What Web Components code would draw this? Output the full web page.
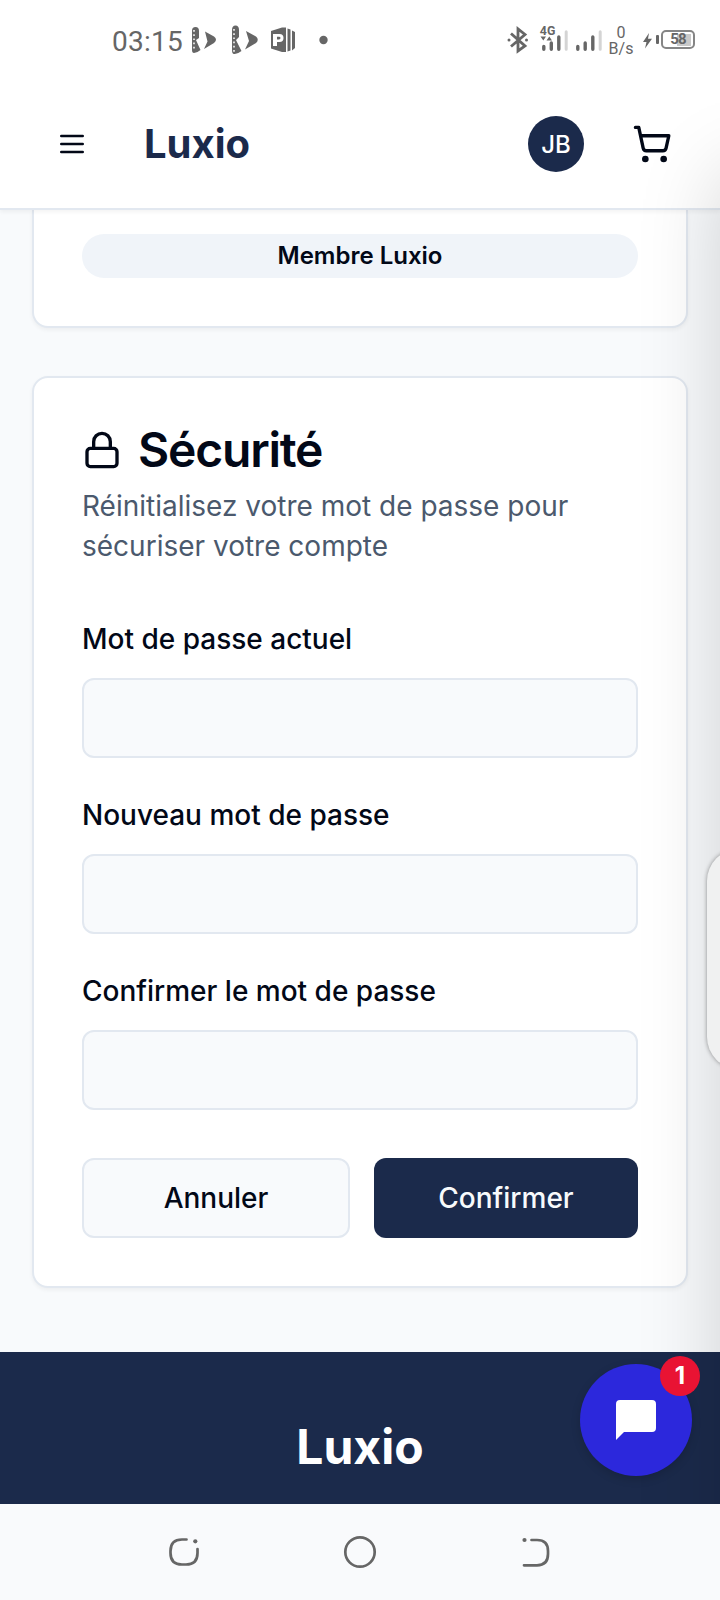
<!DOCTYPE html>
<html lang="fr">
<head>
<meta charset="utf-8">
<title>Luxio – Sécurité</title>
<style>
html,body{margin:0;padding:0}
body{width:720px;height:1600px;overflow:hidden;font-family:Inter,"Liberation Sans",sans-serif;color:#020817;background:#f8fafc}
</style>
</head>
<body>
<luxio-app></luxio-app>
<script>
function define(name, html) {
  const t = document.createElement('template');
  t.innerHTML = html;
  customElements.define(name, class extends HTMLElement {
    constructor() {
      super();
      this.attachShadow({ mode: 'open' }).appendChild(t.content.cloneNode(true));
    }
  });
}

define('status-bar', `
<style>
:host{display:flex;box-sizing:border-box;height:80px;background:#fff;color:#666;font-family:Roboto,sans-serif;justify-content:space-between;padding:0 25px 0 112px;position:relative;z-index:1}
.side{display:flex;align-items:flex-start}
svg{display:block;flex:none}
.time{font-size:28px;line-height:33px;letter-spacing:.25px;margin-top:25px;width:76.5px;white-space:nowrap}
.rate{display:flex;flex-direction:column;align-items:center;width:26px;margin:25px 0 0 6px;font-size:16px;line-height:16px;white-space:nowrap}
.bat{box-sizing:border-box;display:flex;align-items:center;justify-content:center;width:34px;height:19px;border:2px solid #858585;border-radius:5px;margin:30px 0 0 1px;font-size:15px;font-weight:700;line-height:15px;letter-spacing:-.8px;background:linear-gradient(#c9c9c9,#c9c9c9) 14px 1.5px/14px 12px no-repeat}
</style>
<div class="side">
 <span class="time">03:15</span>
 <svg width="110" height="80" viewBox="189 0 110 80" fill="#666">
  <g><path d="M192 30.500Q192 27 195.500 27Q199 27 199 31V38L196 40L200.500 50Q197 53 194 53Q192 53 192 50Z"/><path d="M205 31.500L214 36.500Q218 39.500 214 43L204 49L207.500 41.500Z"/><path d="M194 30v21" stroke="#fff" stroke-width="1.500" stroke-dasharray="1.700 2.500"/></g>
  <g><path d="M232 30Q232 25.500 235.500 25.500Q239 25.500 239 30V37L236 40L241.500 51Q237 54.500 234 54Q232 54 232 50Z"/><path d="M246 31L256 36.500Q259.500 39.500 256 43L245 49.500L249 41Z"/><path d="M234 29v23" stroke="#fff" stroke-width="1.500" stroke-dasharray="1.700 2.500"/></g>
  <path d="M271 31L282 27.500H286V52H282L271 48.500Z"/><path d="M287.500 28.500L290.500 29.500V50.500L287.500 51.500ZM292 30.500L295 32V48L292 50.500Z"/>
  <path d="M273 34h6.500q4 0 4 4t-4 4H277v4h-4z" fill="#fff"/><path d="M277 36.700h2q1.500 0 1.500 1.400t-1.500 1.400h-2z"/>
 </svg>
 <svg width="30" height="80"><circle cx="24.500" cy="40" r="4.200" fill="#666"/></svg>
</div>
<div class="side">
 <svg width="96" height="80" viewBox="506 0 96 80" fill="#666">
  <path d="M511 33.500L525 46L518 51V29L525 34.500L511 46.500" fill="none" stroke="#666" stroke-width="2.800"/><circle cx="509" cy="40" r="1.500"/><circle cx="526.500" cy="40" r="1.500"/>
  <text x="539.800" y="35" font-size="13.500" font-weight="700" textLength="15.500" lengthAdjust="spacingAndGlyphs">4G</text>
  <path d="M540.500 36.500h5.500l-2.700 4zM546.500 40.500h5.500l-2.700-4z"/>
  <g stroke-width="3.400" stroke-linecap="round" stroke="#666"><path d="M543.800 46.400v2.900M551.300 43v6.300M558.800 37v12.300M577.800 46.400v2.900M585.200 43v6.300M592.800 37v12.300"/><path stroke="#d4d4d4" stroke-width="3" d="M566.200 31.700v17.600M600.200 31.700v17.600"/></g>
 </svg>
 <div class="rate"><span>0</span><span>B/s</span></div>
 <svg width="24" height="80" viewBox="636 0 24 80" fill="#666" style="margin-left:2px"><path d="M649 33L643 42H646.500L645 48.500L652 38.800H648Z"/><rect x="656" y="35" width="3" height="9" rx="1"/></svg>
 <div class="bat">58</div>
</div>`);

define('app-header', `
<style>
:host{display:flex;box-sizing:border-box;align-items:center;height:130px;background:#fff;border-bottom:2px solid #e2e8f0;padding:0 48px 0 56px;box-shadow:0 2px 4px rgba(0,0,0,.05);position:relative}
svg{display:block;fill:none;stroke:#020817;stroke-width:2;stroke-linecap:round;stroke-linejoin:round}
.brand{margin-left:56px;font-size:40px;line-height:56px;font-weight:700;color:#1b2a4b}
.av{margin-left:auto;width:56px;height:56px;border-radius:50%;background:#1b2a4b;color:#fff;display:flex;align-items:center;justify-content:center;font-size:24px;font-weight:500}
.cart{margin-left:48px}
</style>
<svg width="32" height="32" viewBox="0 0 24 24"><path d="M4 6h16M4 12h16M4 18h16"/></svg>
<span class="brand">Luxio</span>
<span class="av">JB</span>
<svg class="cart" width="40" height="40" viewBox="0 0 24 24"><circle cx="8" cy="21" r="1"/><circle cx="19" cy="21" r="1"/><path d="M2.050 2.050h2l2.660 12.420a2 2 0 0 0 2 1.580h9.780a2 2 0 0 0 1.950-1.570l1.650-7.430H5.120"/></svg>`);

define('luxio-card', `
<style>
:host{display:block;box-sizing:border-box;background:#fff;border:2px solid #e2e8f0;border-radius:16px;padding:48px;box-shadow:0 2px 4px rgba(0,0,0,.05)}
:host([cut]){border-top:0;border-radius:0 0 16px 16px;padding-top:24px}
</style><slot></slot>`);

define('member-badge', `
<style>
:host{display:flex;height:44px;border-radius:22px;background:#f0f4f9;align-items:center;justify-content:center;font-size:24px;font-weight:600;line-height:32px}
</style><slot></slot>`);

define('card-heading', `
<style>
:host{display:block}
.t{display:flex;gap:16px;align-items:center;font-size:48px;line-height:48px;font-weight:600;letter-spacing:-.025em}
svg{display:block;fill:none;stroke:#020817;stroke-width:2;stroke-linecap:round;stroke-linejoin:round}
.d{margin:12px 0 48px;font-size:28px;line-height:40px;color:#4b596d}
</style>
<div class="t"><svg width="40" height="40" viewBox="0 0 24 24"><rect width="18" height="11" x="3" y="11" rx="2"/><path d="M7 11V7a5 5 0 0 1 10 0v4"/></svg><span><slot></slot></span></div>
<div class="d"><slot name="description"></slot></div>`);

define('password-field', `
<style>
:host{display:block;margin-bottom:32px}
label{display:block;font-size:28px;line-height:48px;font-weight:500;padding-top:1px;height:47px;margin-bottom:16px}
input{display:block;box-sizing:border-box;width:100%;height:80px;border:2px solid #e2e8f0;border-radius:12px;background:#f8fafc;padding:0 24px;font:inherit;outline:0}
</style>
<label><slot></slot></label><input type="password">`);

define('luxio-button', `
<style>
:host{display:flex;box-sizing:border-box;flex:1 1 0;height:80px;align-items:center;justify-content:center;border-radius:12px;font-size:28px;line-height:40px;font-weight:500;background:#1b2a4b;color:#f8fafc}
:host([outline]){border:2px solid #e2e8f0;background:#f8fafc;color:#020817}
</style><slot></slot>`);

define('button-row', `
<style>:host{display:flex;gap:24px;margin-top:48px}</style><slot></slot>`);

define('app-footer', `
<style>
:host{display:block;box-sizing:border-box;height:152px;background:#1b2a4b;color:#fff;text-align:center;padding-top:63px;font-size:48px;line-height:64px;font-weight:700}
</style>Luxio`);

define('chat-bubble', `
<style>
:host{position:absolute;left:580px;top:1364px;width:112px;height:112px;border-radius:50%;background:#2c28dc;display:flex;align-items:center;justify-content:center;box-shadow:0 3px 10px rgba(0,0,0,.16)}
.n{position:absolute;right:-8px;top:-8px;width:40px;height:40px;border-radius:50%;background:#e91333;color:#fff;display:flex;align-items:center;justify-content:center;font-size:24px;line-height:38px;font-weight:700}
svg{display:block}
</style>
<svg width="40" height="40" viewBox="0 0 40 40" fill="#fff"><path d="M4 0H36a4 4 0 0 1 4 4V28a4 4 0 0 1-4 4H8L0 40V4A4 4 0 0 1 4 0Z"/></svg>
<span class="n">1</span>`);

define('edge-panel', `
<style>
:host{position:absolute;left:0;top:0;width:720px;height:1504px;overflow:hidden;pointer-events:none;z-index:1}
.shade{position:absolute;left:720px;top:172px;width:300px;height:1600px;box-shadow:0 0 76px rgba(0,0,0,.17)}
.grip{position:absolute;left:707px;top:849px;width:80px;height:220px;border-radius:32px;background:#f0f1f1;box-shadow:0 0 4px rgba(0,0,0,.4)}
</style>
<div class="shade"></div><div class="grip"></div>`);

define('nav-bar', `
<style>
:host{display:flex;height:96px;background:#f9fafc}
svg{display:block}
</style>
<svg width="720" height="96" viewBox="0 1504 720 96" fill="none" stroke="#666" stroke-width="2.700" stroke-linecap="round"><path d="M186.500 1539.500H182Q170.500 1539.500 170.500 1551V1553Q170.500 1564.500 182 1564.500H186Q197.500 1564.500 197.500 1553V1549"/><circle cx="360" cy="1552" r="14.700"/><path d="M531.500 1540H537Q548 1540 548 1551V1554Q548 1565.300 537 1565.300H524"/><g fill="#666" stroke="none"><circle cx="195.300" cy="1541.300" r="2.100"/><circle cx="524.500" cy="1540" r="2.100"/></g></svg>`);

define('luxio-app', `
<style>
:host{display:flex;flex-direction:column;position:relative;width:720px;height:1600px;overflow:hidden}
main{box-sizing:border-box;height:1142px;padding:0 32px;display:flex;flex-direction:column;gap:48px}
chat-bubble{z-index:2}
</style>
<status-bar></status-bar>
<app-header></app-header>
<main>
 <luxio-card cut><member-badge>Membre Luxio</member-badge></luxio-card>
 <luxio-card>
  <card-heading>Sécurité<span slot="description">Réinitialisez votre mot de passe pour sécuriser votre compte</span></card-heading>
  <password-field>Mot de passe actuel</password-field>
  <password-field>Nouveau mot de passe</password-field>
  <password-field>Confirmer le mot de passe</password-field>
  <button-row><luxio-button outline>Annuler</luxio-button><luxio-button>Confirmer</luxio-button></button-row>
 </luxio-card>
</main>
<app-footer></app-footer>
<nav-bar></nav-bar>
<edge-panel></edge-panel>
<chat-bubble></chat-bubble>`);
</script>
</body>
</html>
